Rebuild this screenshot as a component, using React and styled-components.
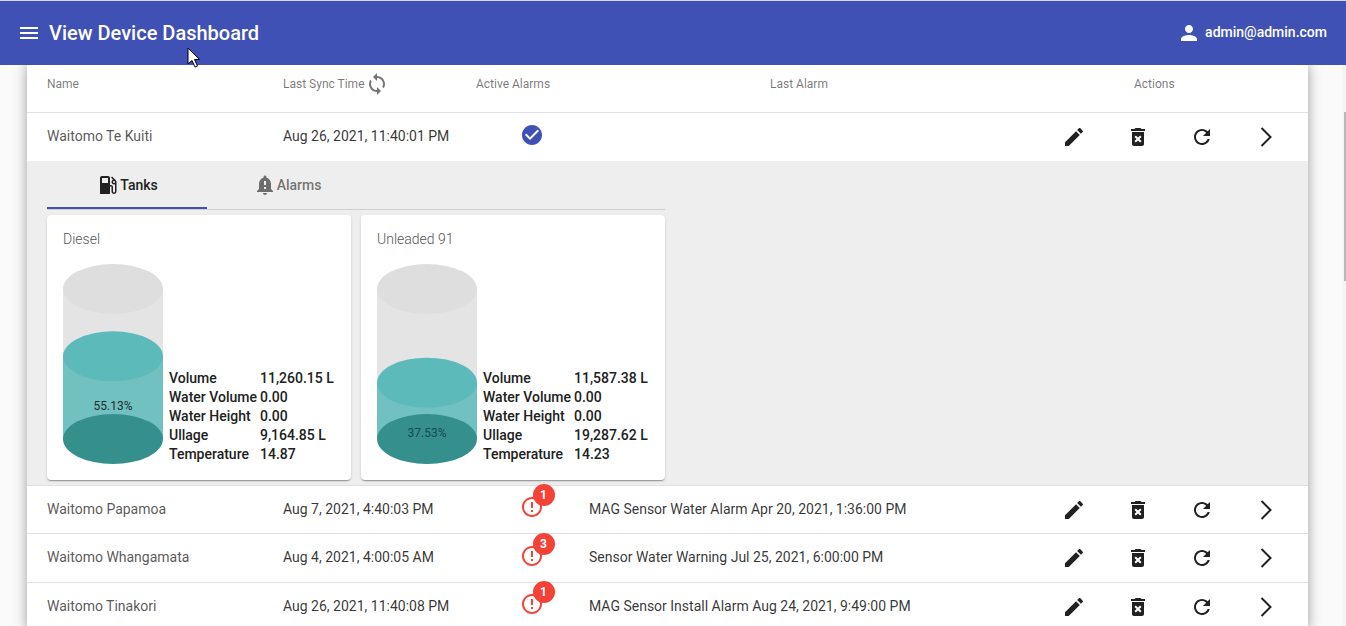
import React from 'react';
import styled, { createGlobalStyle } from 'styled-components';

const paths = {
  menu: 'M3 18h18v-2H3v2zm0-5h18v-2H3v2zm0-7v2h18V6H3z',
  person: 'M12 12c2.21 0 4-1.79 4-4s-1.79-4-4-4-4 1.79-4 4 1.79 4 4 4zm0 2c-2.67 0-8 1.34-8 4v2h16v-2c0-2.66-5.33-4-8-4z',
  sync: 'M12 4V1L8 5l4 4V6c3.31 0 6 2.69 6 6 0 1.01-.25 1.97-.7 2.8l1.46 1.46C19.54 15.03 20 13.57 20 12c0-4.42-3.58-8-8-8zm0 14c-3.31 0-6-2.69-6-6 0-1.01.25-1.97.7-2.8L5.24 7.74C4.46 8.97 4 10.43 4 12c0 4.42 3.58 8 8 8v3l4-4-4-4v3z',
  edit: 'M3 17.25V21h3.75L17.81 9.94l-3.75-3.75L3 17.25zM20.71 7.04c.39-.39.39-1.02 0-1.41l-2.34-2.34c-.39-.39-1.02-.39-1.41 0l-1.83 1.83 3.75 3.75 1.83-1.83z',
  deleteForever: 'M6 19c0 1.1.9 2 2 2h8c1.1 0 2-.9 2-2V7H6v12zm2.46-7.12l1.41-1.41L12 12.59l2.12-2.12 1.41 1.41L13.41 14l2.12 2.12-1.41 1.41L12 15.41l-2.12 2.12-1.41-1.41L10.59 14l-2.13-2.12zM15.5 4l-1-1h-5l-1 1H5v2h14V4z',
  refresh: 'M17.65 6.35C16.2 4.9 14.21 4 12 4c-4.42 0-7.99 3.58-7.99 8s3.57 8 7.99 8c3.73 0 6.84-2.55 7.73-6h-2.08c-.82 2.33-3.04 4-5.65 4-3.31 0-6-2.69-6-6s2.69-6 6-6c1.66 0 3.14.69 4.22 1.78L13 11h7V4l-2.35 2.35z',
  check: 'M12 2C6.48 2 2 6.48 2 12s4.48 10 10 10 10-4.48 10-10S17.52 2 12 2zm-2 15l-5-5 1.41-1.41L10 14.17l7.59-7.59L19 8l-9 9z',
  error: 'M11 15h2v2h-2zm0-8h2v6h-2zm.99-5C6.47 2 2 6.48 2 12s4.47 10 9.99 10C17.52 22 22 17.52 22 12S17.52 2 11.99 2zM12 20c-4.42 0-8-3.58-8-8s3.58-8 8-8 8 3.58 8 8-3.58 8-8 8z',
  gas: 'M19.77 7.23l.01-.01-3.72-3.72L15 4.56l2.11 2.11c-.94.36-1.61 1.26-1.61 2.33 0 1.38 1.12 2.5 2.5 2.5.36 0 .69-.08 1-.21v7.21c0 .55-.45 1-1 1s-1-.45-1-1V14c0-1.1-.9-2-2-2h-1V5c0-1.1-.9-2-2-2H6c-1.1 0-2 .9-2 2v16h10v-7.5h1.5v5c0 1.38 1.12 2.5 2.5 2.5s2.5-1.12 2.5-2.5V9c0-.69-.28-1.32-.73-1.77zM12 10H6V5h6v5zm6 0c-.55 0-1-.45-1-1s.45-1 1-1 1 .45 1 1-.45 1-1 1z',
  bell: 'M18 16v-5c0-3.07-1.63-5.64-4.5-6.32V4c0-.83-.67-1.5-1.5-1.5s-1.5.67-1.5 1.5v.68C7.64 5.36 6 7.92 6 11v5l-2 2v1h16v-1l-2-2zm-5 0h-2v-2h2v2zm0-4h-2V8h2v4zm-1 10c1.1 0 2-.9 2-2h-4c0 1.1.9 2 2 2z',
};

const GlobalStyle = createGlobalStyle`
  html, body {
    margin: 0;
    height: 626px;
    overflow: hidden;
    background: #fafafa;
    font-family: Roboto, "Liberation Sans", sans-serif;
  }
`;

const Svg = styled.svg`
  width: 24px;
  height: 24px;
  flex-shrink: 0;
  display: block;
  fill: ${props => props.$color || 'currentColor'};
  margin-bottom: ${props => props.$lift || 0}px;
`;

const Icon = ({ name, color, lift }) => (
  <Svg viewBox="0 0 24 24" $color={color} $lift={lift}>
    <path d={paths[name]} />
  </Svg>
);

const Chevron = styled.svg`
  width: 24px;
  height: 24px;
  fill: none;
  stroke: #212121;
  stroke-width: 2;
`;

const AppBar = styled.header`
  position: relative;
  z-index: 2;
  height: 64px;
  border-top: 1px solid #d8d8d8;
  background: #3f51b5;
  color: #fff;
  display: flex;
  align-items: center;
  padding: 0 19px 0 17px;
`;

const Title = styled.h1`
  margin: 0 0 0 8px;
  font-size: 20px;
  font-weight: 500;
  flex: 1;
`;

const User = styled.div`
  display: flex;
  align-items: center;
  font-size: 14px;
  font-weight: 500;
  gap: 4px;
`;

const UserEmail = styled.span`
  margin-bottom: 3px;
`;

const Pointer = styled.svg`
  position: absolute;
  left: 187px;
  top: 46px;
  width: 13px;
  height: 21px;
`;

const Scrollbar = styled.div`
  position: fixed;
  top: 65px;
  right: 0;
  bottom: 0;
  width: 4px;
  background: #f5f5f5;

  &::after {
    content: '';
    position: absolute;
    top: 47px;
    right: 0;
    width: 2px;
    height: 169px;
    background: #b8b8b8;
  }
`;

const Main = styled.main`
  padding: 0 38px 0 27px;
`;

const Card = styled.section`
  background: #fff;
  box-shadow: 0 0 12px rgba(0, 0, 0, 0.38);
`;

const columns = '236px 193px 113px 1fr 256px';

const HeadRow = styled.div`
  display: grid;
  grid-template-columns: ${columns};
  align-items: center;
  height: 38px;
  padding: 0 10px 9px 20px;
  border-bottom: 1px solid #e0e0e0;
  font-size: 12px;
  color: rgba(0, 0, 0, 0.54);
`;

const HeadCell = styled.div`
  display: flex;
  align-items: center;
  padding-left: ${props => props.$indent || 0}px;
`;

const Row = styled.div`
  display: grid;
  grid-template-columns: ${columns};
  align-items: center;
  height: 48.5px;
  box-sizing: border-box;
  padding: 0 10px ${props => (props.$tight ? 1 : 2)}px 20px;
  border-bottom: 1px solid #e0e0e0;
  font-size: 14px;
  color: rgba(0, 0, 0, 0.8);
`;

const NameCell = styled.div`
  color: rgba(0, 0, 0, 0.68);
`;

const AlarmCell = styled.div`
  display: flex;
  justify-content: center;
  padding-right: 2px;
`;

const AlarmIcon = styled.div`
  position: relative;
  width: 24px;
  height: 24px;
  margin-bottom: 3px;
`;

const Badge = styled.span`
  position: absolute;
  top: -11px;
  left: 13px;
  width: 22px;
  height: 22px;
  border-radius: 50%;
  background: #f44336;
  color: #fff;
  font-size: 12px;
  font-weight: 700;
  display: flex;
  align-items: center;
  justify-content: center;
`;

const Actions = styled.div`
  display: grid;
  grid-template-columns: repeat(4, 64px);
  justify-items: center;
  color: #212121;
  padding-top: 2px;
`;

const Panel = styled.div`
  background: #eeeeee;
  padding: 0 20px 5px;
  border-bottom: 1px solid #e0e0e0;
  margin: -0.5px 0;
`;

const TabBar = styled.div`
  display: flex;
  width: 618px;
  height: 48px;
  border-bottom: 1px solid #cfcfcf;
`;

const Tab = styled.div`
  width: 160px;
  height: 48px;
  box-sizing: border-box;
  display: flex;
  align-items: center;
  justify-content: center;
  font-size: 14px;
  font-weight: 500;
  color: ${props => (props.$active ? '#212121' : 'rgba(0, 0, 0, 0.54)')};
  border-bottom: 2px solid ${props => (props.$active ? '#3f51b5' : 'transparent')};
  padding-top: 2px;
`;

const Tanks = styled.div`
  display: flex;
  gap: 10px;
  margin-top: 5px;
`;

const TankCard = styled.article`
  width: 304px;
  height: 265px;
  box-sizing: border-box;
  padding: 16px;
  background: #fff;
  border-radius: 4px;
  box-shadow: 0 2px 1px -1px rgba(0, 0, 0, 0.2), 0 1px 1px 0 rgba(0, 0, 0, 0.14), 0 1px 3px 0 rgba(0, 0, 0, 0.12);
`;

const TankName = styled.div`
  font-size: 14px;
  font-weight: 300;
  line-height: 16px;
  color: #555;
  margin-bottom: 17px;
`;

const TankBody = styled.div`
  display: flex;
  align-items: flex-end;
  gap: 6px;
`;

const TankSvg = styled.svg`
  width: 100px;
  height: 200px;
  flex-shrink: 0;
`;

const Info = styled.dl`
  display: grid;
  grid-template-columns: 91px auto;
  grid-auto-rows: 19px;
  align-items: center;
  margin: 0 0 1px;
  font-size: 14px;
  font-weight: 500;
  color: #212121;
`;

const InfoValue = styled.dd`
  margin: 0;
  white-space: nowrap;
`;

const InfoLabel = styled.dt`
  white-space: nowrap;
`;

const PercentText = styled.text`
  font-size: 12px;
  text-anchor: middle;
  dominant-baseline: middle;
`;

const Tank = ({ pct }) => {
  const top = 175 - (pct * 150) / 100;
  return (
    <TankSvg viewBox="0 0 100 200">
      <rect x="0" y="25" width="100" height="150" fill="#e4e4e4" />
      <ellipse cx="50" cy="25" rx="50" ry="25" fill="#dedede" />
      <rect x="0" y={top} width="100" height={175 - top} fill="#72c1c1" />
      <ellipse cx="50" cy={top} rx="50" ry="25" fill="#5cbaba" />
      <ellipse cx="50" cy="175" rx="50" ry="25" fill="#358f8d" />
      <PercentText x="50" y={top + 51} fill={pct < 40 ? '#174c4b' : '#1f2d2d'}>
        {pct.toFixed(2)}%
      </PercentText>
    </TankSvg>
  );
};

const tanks = [
  { name: 'Diesel', pct: 55.13, volume: '11,260.15 L', ullage: '9,164.85 L', temp: '14.87' },
  { name: 'Unleaded 91', pct: 37.53, volume: '11,587.38 L', ullage: '19,287.62 L', temp: '14.23' },
];

const devices = [
  { name: 'Waitomo Papamoa', sync: 'Aug 7, 2021, 4:40:03 PM', count: 1, alarm: 'MAG Sensor Water Alarm Apr 20, 2021, 1:36:00 PM' },
  { name: 'Waitomo Whangamata', sync: 'Aug 4, 2021, 4:00:05 AM', count: 3, alarm: 'Sensor Water Warning Jul 25, 2021, 6:00:00 PM' },
  { name: 'Waitomo Tinakori', sync: 'Aug 26, 2021, 11:40:08 PM', count: 1, alarm: 'MAG Sensor Install Alarm Aug 24, 2021, 9:49:00 PM' },
];

const RowActions = () => (
  <Actions>
    <Icon name="edit" />
    <Icon name="deleteForever" />
    <Icon name="refresh" />
    <Chevron viewBox="0 0 24 24"><path d="M7.5 3l9 9-9 9" /></Chevron>
  </Actions>
);

export default function App() {
  return (
    <>
      <GlobalStyle />
      <AppBar>
        <Icon name="menu" />
        <Title>View Device Dashboard</Title>
        <User>
          <Icon name="person" />
          <UserEmail>admin@admin.com</UserEmail>
        </User>
        <Pointer viewBox="0 0 13 21">
          <path d="M1 1v16l4-3.5 3 6.5 2.5-1-3-6.5h5z" fill="#fff" stroke="#000" strokeWidth="1" />
        </Pointer>
      </AppBar>
      <Scrollbar />
      <Main>
        <Card>
          <HeadRow>
            <HeadCell>Name</HeadCell>
            <HeadCell>
              Last Sync Time
              <Icon name="sync" color="#757575" />
            </HeadCell>
            <HeadCell>Active Alarms</HeadCell>
            <HeadCell $indent={181}>Last Alarm</HeadCell>
            <HeadCell $indent={92}>Actions</HeadCell>
          </HeadRow>
          <Row>
            <NameCell>Waitomo Te Kuiti</NameCell>
            <div>Aug 26, 2021, 11:40:01 PM</div>
            <AlarmCell><Icon name="check" color="#3f51b5" lift={2} /></AlarmCell>
            <div />
            <RowActions />
          </Row>
          <Panel>
            <TabBar>
              <Tab $active><Icon name="gas" />Tanks</Tab>
              <Tab><Icon name="bell" />Alarms</Tab>
            </TabBar>
            <Tanks>
              {tanks.map(t => (
                <TankCard key={t.name}>
                  <TankName>{t.name}</TankName>
                  <TankBody>
                    <Tank pct={t.pct} />
                    <Info>
                      <InfoLabel>Volume</InfoLabel><InfoValue>{t.volume}</InfoValue>
                      <InfoLabel>Water Volume</InfoLabel><InfoValue>0.00</InfoValue>
                      <InfoLabel>Water Height</InfoLabel><InfoValue>0.00</InfoValue>
                      <InfoLabel>Ullage</InfoLabel><InfoValue>{t.ullage}</InfoValue>
                      <InfoLabel>Temperature</InfoLabel><InfoValue>{t.temp}</InfoValue>
                    </Info>
                  </TankBody>
                </TankCard>
              ))}
            </Tanks>
          </Panel>
          {devices.map(d => (
            <Row key={d.name} $tight>
              <NameCell>{d.name}</NameCell>
              <div>{d.sync}</div>
              <AlarmCell>
                <AlarmIcon>
                  <Icon name="error" color="#f44336" />
                  <Badge>{d.count}</Badge>
                </AlarmIcon>
              </AlarmCell>
              <div>{d.alarm}</div>
              <RowActions />
            </Row>
          ))}
        </Card>
      </Main>
    </>
  );
}
